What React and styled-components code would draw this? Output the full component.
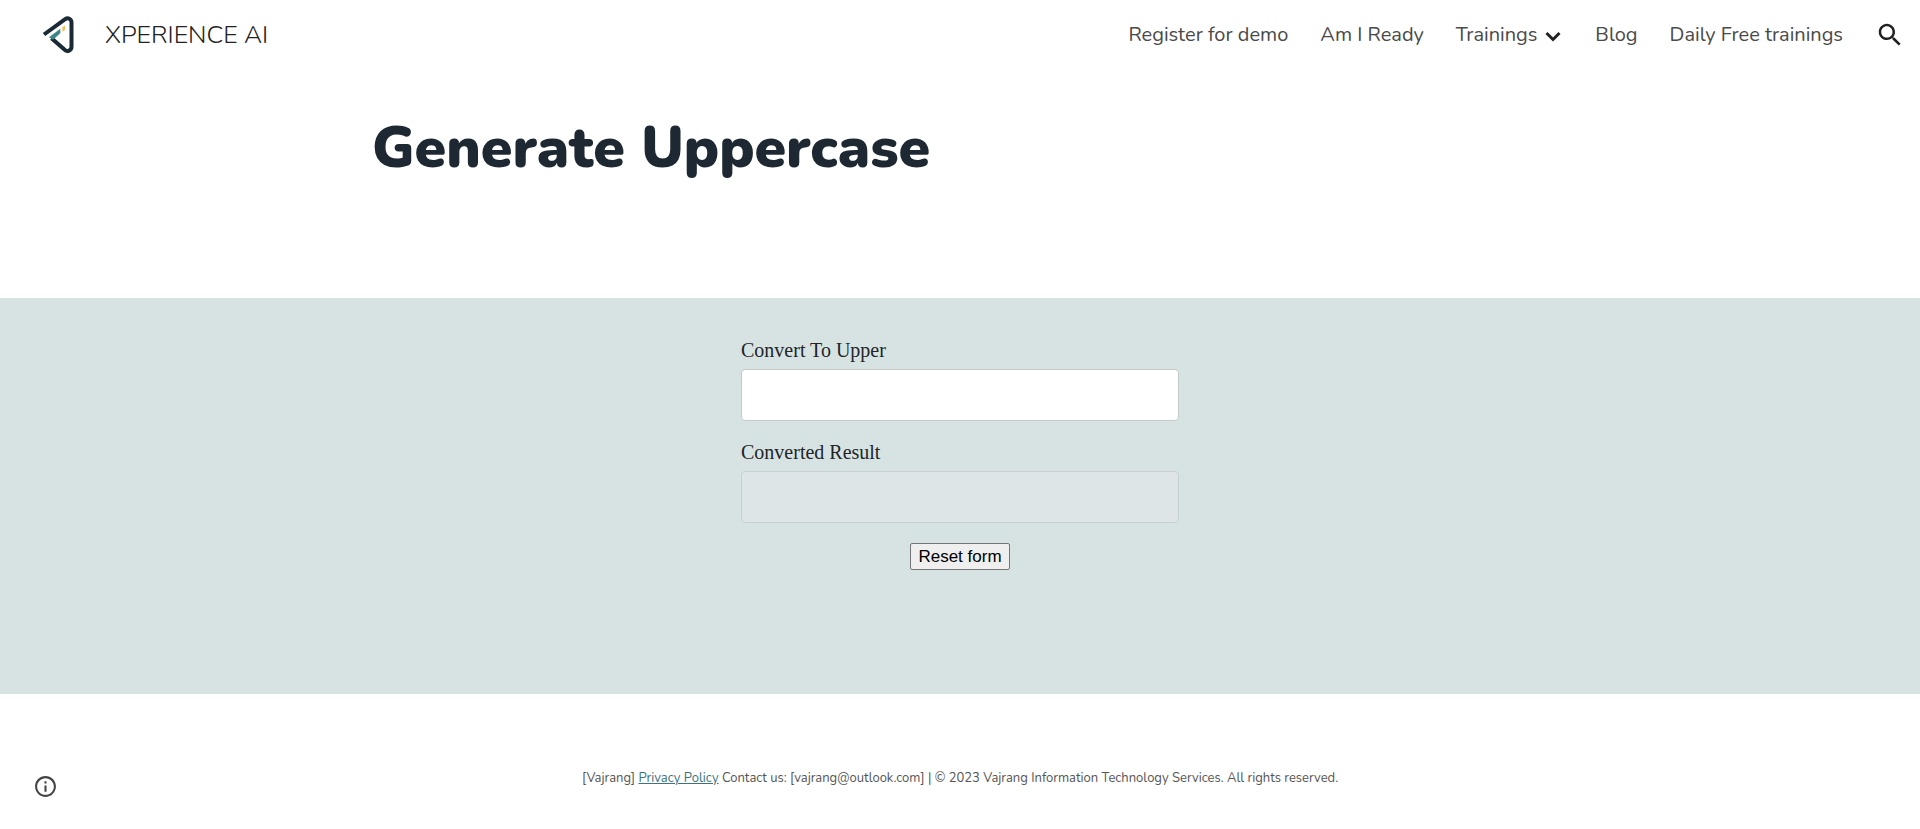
import React, { useState } from "react";
import styled, { createGlobalStyle } from "styled-components";

const sans = `Nunito, Lato, "Open Sans", sans-serif`;

const GlobalStyle = createGlobalStyle`
  *, *::before, *::after { box-sizing: border-box; }
  body { margin: 0; background: #fff; color: #212121; font-family: ${sans}; }
`;

const Header = styled.header`
  display: flex;
  align-items: center;
  justify-content: space-between;
  min-height: 70px;
  padding: 0 15px 0 40px;
`;

const Brand = styled.a`
  display: flex;
  align-items: center;
  gap: 28px;
  color: #212121;
  font-size: 25px;
  font-weight: 300;
  line-height: 32px;
  text-decoration: none;
`;

const Nav = styled.nav`
  display: flex;
  align-items: center;
  gap: 32px;
`;

const NavLink = styled.a`
  display: flex;
  align-items: center;
  gap: 6px;
  color: #4a4a4a;
  font-size: 20px;
  font-weight: 400;
  line-height: 28px;
  text-decoration: none;
`;

const IconButton = styled.button`
  display: flex;
  padding: 0;
  border: 0;
  background: none;
  color: ${(p) => p.$color};
  cursor: pointer;
`;

const Hero = styled.section`
  width: 100%;
  max-width: 1280px;
  min-height: 228px;
  margin: 0 auto;
  padding: 42px 52px;
`;

const Title = styled.h1`
  margin: 0;
  color: #1e2832;
  font-size: 57px;
  font-weight: 900;
  line-height: 72px;
`;

const Panel = styled.section`
  display: flex;
  justify-content: center;
  min-height: 396px;
  padding: 41px 16px;
  background: #d7e3e2;
`;

const Form = styled.form`
  display: flex;
  flex-direction: column;
  width: 438px;
  max-width: 100%;
`;

const Field = styled.div`
  display: flex;
  flex-direction: column;
  gap: 8px;
  margin-bottom: 20px;
`;

const Label = styled.label`
  color: #212529;
  font-family: "Liberation Serif", serif;
  font-size: 20px;
  line-height: 22px;
`;

const TextInput = styled.input`
  width: 100%;
  height: 52px;
  padding: 12px 20px;
  border: 1px solid ${(p) => (p.disabled ? "#c8cfd0" : "#c4caca")};
  border-radius: 4px;
  background: ${(p) => (p.disabled ? "#dde5e6" : "#fff")};
  font-size: 16px;
`;

const ResetButton = styled.button`
  align-self: center;
  width: 100px;
  height: 27px;
  padding: 0;
  border: 1px solid #767676;
  border-radius: 2px;
  background: #efefef;
  color: #000;
  font-family: "Liberation Sans", sans-serif;
  font-size: 17px;
  line-height: 22px;
`;

const Footer = styled.footer`
  display: grid;
  grid-template-columns: 80px 1fr 80px;
  align-items: center;
  min-height: 135px;
  padding: 32px 0 0;
`;

const InfoSlot = styled.div`
  display: flex;
  padding: 17px 0 0 33px;
`;

const Legal = styled.p`
  margin: 0;
  color: #555;
  font-size: 13px;
  font-weight: 400;
  line-height: 20px;
  text-align: center;
`;

const PolicyLink = styled.a`
  color: #3b7480;
`;

const Logo = () => (
  <svg width="37" height="44" viewBox="0 0 37 44" fill="none" aria-hidden="true">
    <path d="M4 21.5 25.2 6.2C27.8 4.3 31.5 5.7 31.5 9.5V33.5C31.5 37.6 27.3 39.3 24.4 36.6L11.5 25.2" stroke="#1a2936" strokeWidth="4" />
    <path d="M9 24.3 20.3 15.7V20.2L13 26.8Z" fill="#3a8587" />
    <path d="M22.4 14.2 25 12.6V17L22.4 18.8Z" fill="#f3bd53" />
  </svg>
);

const Chevron = () => (
  <svg width="20" height="28" viewBox="0 0 20 28" fill="none" aria-hidden="true">
    <path d="m3.5 12 6.500 6.500L16.500 12" stroke="#212121" strokeWidth="3" />
  </svg>
);

const SearchIcon = () => (
  <svg width="30" height="30" viewBox="0 0 24 24" fill="currentColor" aria-hidden="true">
    <path d="M15.5 14h-.79l-.28-.27C15.41 12.59 16 11.11 16 9.5 16 5.91 13.09 3 9.5 3S3 5.91 3 9.5 5.91 16 9.5 16c1.61 0 3.09-.59 4.23-1.57l.27.28v.79l5 4.99L20.49 19l-4.99-5zm-6 0C7.01 14 5 11.99 5 9.5S7.01 5 9.5 5 14 7.01 14 9.5 11.99 14 9.5 14z" />
  </svg>
);

const InfoIcon = () => (
  <svg width="25" height="25" viewBox="0 0 24 24" fill="currentColor" aria-hidden="true">
    <path d="M11 17h2v-6h-2v6zm1-15C6.48 2 2 6.48 2 12s4.48 10 10 10 10-4.48 10-10S17.52 2 12 2zm0 18c-4.41 0-8-3.59-8-8s3.59-8 8-8 8 3.59 8 8-3.59 8-8 8zM11 9h2V7h-2v2z" />
  </svg>
);

export default function App() {
  const [text, setText] = useState("");
  return (
    <>
      <GlobalStyle />
      <Header>
        <Brand href="#home">
          <Logo />
          XPERIENCE AI
        </Brand>
        <Nav aria-label="Main">
          <NavLink href="#register">Register for demo</NavLink>
          <NavLink href="#ready">Am I Ready</NavLink>
          <NavLink href="#trainings">
            Trainings
            <Chevron />
          </NavLink>
          <NavLink href="#blog">Blog</NavLink>
          <NavLink href="#free-trainings">Daily Free trainings</NavLink>
          <IconButton type="button" $color="#212121" aria-label="Search">
            <SearchIcon />
          </IconButton>
        </Nav>
      </Header>
      <main>
        <Hero>
          <Title>Generate Uppercase</Title>
        </Hero>
        <Panel>
          <Form
            onSubmit={(e) => e.preventDefault()}
            onReset={() => setText("")}
          >
            <Field>
              <Label htmlFor="source">Convert To Upper</Label>
              <TextInput id="source" value={text} onChange={(e) => setText(e.target.value)} />
            </Field>
            <Field>
              <Label htmlFor="result">Converted Result</Label>
              <TextInput id="result" value={text.toUpperCase()} disabled />
            </Field>
            <ResetButton type="reset">Reset form</ResetButton>
          </Form>
        </Panel>
      </main>
      <Footer>
        <InfoSlot>
          <IconButton type="button" $color="#444" aria-label="Site information">
            <InfoIcon />
          </IconButton>
        </InfoSlot>
        <Legal>
          [Vajrang] <PolicyLink href="#privacy">Privacy Policy</PolicyLink> Contact us:
          [vajrang@outlook.com] | © 2023 Vajrang Information Technology Services. All rights reserved.
        </Legal>
      </Footer>
    </>
  );
}
